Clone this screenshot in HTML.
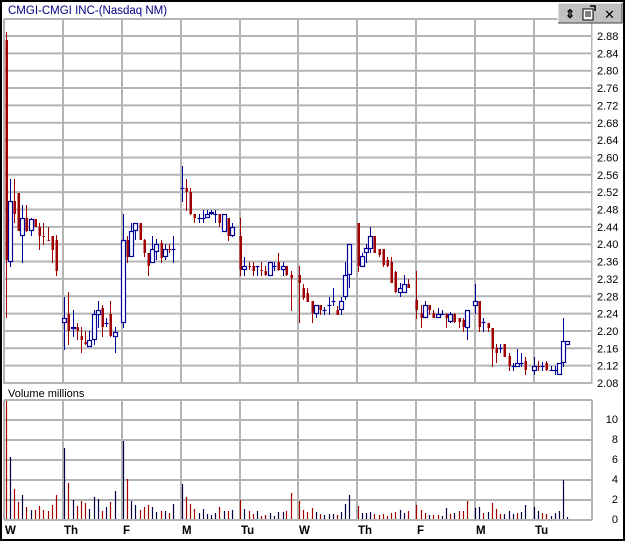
<!DOCTYPE html>
<html><head><meta charset="utf-8"><style>
html,body{margin:0;padding:0;background:#fff;}
body{width:625px;height:541px;overflow:hidden;position:relative;font-family:"Liberation Sans",Arial,sans-serif;}
#frame{position:absolute;left:0;top:0;width:621px;height:537px;border:2px solid #000;border-right-width:3px;border-bottom-width:2px;background:#fff;}
.t{position:absolute;font-size:11px;color:#000;}
</style></head><body>
<div id="frame"></div>
<svg id="s" width="625" height="541" style="position:absolute;left:0;top:0" xmlns="http://www.w3.org/2000/svg" font-family="Liberation Sans, Arial, sans-serif">
<text x="8" y="14" font-size="11.5" fill="#000080">CMGI-CMGI INC-(Nasdaq NM)</text>
<text x="8" y="397" font-size="11" fill="#000">Volume  millions</text>
<g id="g"></g>
<!-- toolbar -->
<rect x="558" y="3" width="64" height="20" fill="#c0c0c0"/>
<path d="M558 23V3H622" stroke="#fff" fill="none"/>
<path d="M558 23H622V3" stroke="#404040" fill="none"/>
<text x="565" y="18" font-size="12" font-weight="bold" fill="#000">⇕</text>
<rect x="583" y="9" width="10" height="11" fill="#fff" stroke="#000"/>
<path d="M585 12h6M585 14h6M585 16h6" stroke="#000"/>
<path d="M590 6l5 0 0 5" stroke="#000" fill="none" stroke-width="1.5"/>
<text x="604" y="19" font-size="13" fill="#000">✕</text>
</svg>
<script>
var g=document.getElementById('g'),h='';
function L(x1,y1,x2,y2,c,w){h+='<line x1="'+x1+'" y1="'+y1+'" x2="'+x2+'" y2="'+y2+'" stroke="'+c+'" stroke-width="'+(w||1)+'"/>';}
var G='#b4b4b4';
var vx=[4,63,122,181,240,298,357,416,475,534,592];
// price panel
for(var i=0;i<=20;i++){var y=36+i*17.35;L(4,y,592,y,G,2);}
vx.forEach(function(x){L(x,19,x,384,G,2);L(x,400,x,520,G,2);});
L(4,19,592,19,G,2);
for(var i=0;i<=6;i++){L(4,400+i*20,592,400+i*20,G,2);}
L(593,19,593,384,'#fff',1);
// price labels
for(var i=0;i<=20;i++){var p=(2.88-i*0.04).toFixed(2);h+='<text x="597" y="'+(36+i*17.35+4)+'" font-size="11">'+p+'</text>';}
for(var i=0;i<=5;i++){h+='<text x="618" y="'+(519-i*20+4)+'" font-size="11" text-anchor="end">'+(i*2)+'</text>';}
var days=['W','Th','F','M','Tu','W','Th','F','M','Tu'];
days.forEach(function(d,i){h+='<text x="'+(vx[i]+1)+'" y="534" font-size="11.5" font-weight="bold">'+d+'</text>';});
// candles: x,hi,lo,bt,bb,c
var C=[
[6,32,318,40,260,'r'],[10,179,267,201,262,'b'],[14,179,223,201,214,'r'],[18,193,231,193,231,'r'],[22,205,263,218,236,'b'],[26,205,232,218,231,'r'],[31,218,236,219,231,'b'],[35,219,227,219,227,'r'],[39,223,250,227,236,'r'],[43,223,245,236,237,'r'],[48,227,241,240,241,'r'],[52,236,263,236,250,'r'],[56,235,276,240,271,'r'],
[64,297,350,318,323,'b'],[68,292,345,314,331,'r'],[73,310,337,327,329,'b'],[77,323,340,327,331,'r'],[81,327,353,336,340,'r'],[85,331,345,342,344,'r'],[89,331,347,340,347,'b'],[94,310,345,314,340,'b'],[98,301,328,310,315,'b'],[102,305,337,308,327,'r'],[106,318,327,323,324,'b'],[110,301,337,314,336,'r'],[115,327,353,332,337,'b'],
[123,214,328,240,323,'b'],[127,236,263,240,257,'r'],[131,223,257,231,257,'b'],[135,223,240,223,231,'b'],[140,223,240,223,240,'r'],[144,239,257,240,253,'r'],[148,253,276,253,266,'r'],[152,236,263,249,263,'b'],[156,239,260,244,252,'b'],[161,240,263,243,258,'r'],[165,244,260,249,257,'b'],[169,244,253,249,250,'r'],[173,236,263,249,250,'b'],
[182,166,202,188,189,'b'],[186,179,211,188,192,'r'],[190,188,215,192,214,'r'],[194,214,223,214,218,'r'],[199,214,223,218,219,'b'],[203,210,223,218,219,'b'],[207,210,218,214,218,'b'],[211,210,215,212,214,'b'],[215,210,223,214,215,'b'],[219,214,227,214,223,'r'],[224,214,232,214,232,'b'],[228,218,241,218,236,'r'],[232,223,237,227,236,'b'],
[240,218,276,236,270,'r'],[244,257,276,266,270,'b'],[249,262,270,266,267,'r'],[253,262,276,266,271,'r'],[257,266,276,266,267,'b'],[261,262,276,270,271,'r'],[265,266,276,271,275,'r'],[270,262,276,262,276,'b'],[274,262,271,266,267,'b'],[278,253,271,262,270,'r'],[283,262,276,266,270,'b'],[286,266,276,266,275,'r'],[291,271,311,275,278,'r'],
[299,266,323,275,283,'r'],[303,284,300,288,298,'r'],[307,288,302,293,302,'r'],[312,301,323,301,313,'r'],[316,305,318,305,314,'b'],[320,305,315,305,310,'r'],[324,307,315,310,311,'b'],[329,297,315,305,306,'b'],[333,288,306,301,302,'b'],[337,306,315,310,315,'r'],[341,297,315,301,310,'b'],[345,262,300,275,297,'b'],[349,244,288,244,275,'b'],
[358,223,272,223,266,'r'],[362,253,267,256,267,'b'],[366,244,263,248,253,'b'],[370,227,253,236,249,'b'],[374,236,253,236,253,'r'],[379,249,257,249,255,'r'],[383,249,267,249,265,'r'],[387,257,267,260,266,'r'],[391,257,283,262,283,'r'],[395,271,293,272,292,'r'],[400,283,297,288,293,'b'],[404,275,293,284,293,'b'],[408,279,288,284,288,'r'],
[416,271,319,300,310,'r'],[421,305,328,313,318,'r'],[425,301,318,305,318,'b'],[429,305,315,305,310,'r'],[433,310,318,313,318,'r'],[438,308,318,314,318,'b'],[442,310,315,314,315,'b'],[446,313,328,314,318,'r'],[450,312,323,314,322,'b'],[454,313,323,314,322,'r'],[459,318,328,318,322,'r'],[463,318,332,320,327,'r'],[467,310,340,310,328,'b'],
[475,284,314,301,306,'b'],[479,301,332,301,327,'r'],[483,318,332,322,323,'b'],[488,323,332,323,328,'r'],[492,328,367,328,349,'r'],[496,344,363,348,353,'r'],[500,344,353,348,349,'b'],[504,344,357,344,357,'r'],[509,353,371,356,366,'r'],[513,363,371,366,367,'b'],[517,349,367,363,367,'b'],[521,353,367,363,364,'b'],[525,357,375,361,370,'r'],
[534,357,375,366,371,'b'],[538,361,371,366,367,'r'],[542,362,371,366,367,'b'],[546,361,371,363,370,'r'],[551,366,371,370,371,'b'],[555,366,375,370,371,'b'],[559,363,375,363,375,'b'],[563,318,367,341,363,'b'],[567,341,344,341,345,'b']];
var V=[11.8,6.2,3.0,1.7,2.4,1.2,0.9,0.9,1.3,0.9,0.8,1.4,2.4,
7.1,3.6,1.9,1.3,1.8,1.6,1.0,2.2,2.0,0.8,1.2,1.7,2.8,
7.8,4.0,1.8,1.4,0.9,1.2,1.4,1.2,0.7,0.8,0.8,0.6,1.5,
3.5,2.2,1.5,1.0,0.6,1.0,0.5,0.4,0.6,1.2,0.8,0.8,0.9,
1.9,1.0,0.8,0.5,0.8,0.3,0.4,0.6,0.3,0.7,0.7,0.8,2.6,
1.8,0.9,0.7,1.1,0.7,0.5,0.4,0.5,0.5,0.4,0.7,1.5,2.4,
1.3,0.6,0.6,0.7,0.5,0.4,0.5,0.3,0.6,0.7,0.9,0.6,0.8,
1.4,0.9,0.6,0.4,0.4,0.4,0.3,1.1,0.5,0.6,0.8,0.8,1.8,
1.1,1.2,0.6,0.7,1.6,1.0,0.5,0.5,0.8,0.5,0.6,0.7,1.4,
1.2,0.8,0.6,0.5,0.3,0.6,0.8,3.9,0.2];
var VC=['r','b','r','r','b','r','b','r','r','r','r','r','r','b','r','b','r','r','r','b','b','b','r','b','r','b','b','r','b','b','r','r','r','b','b','r','b','r','b','b','r','r','r','b','b','b','b','b','r','b','r','b','r','b','r','r','b','r','r','b','b','b','b','r','r','r','r','r','r','b','r','b','b','b','r','b','b','b','r','b','b','b','r','r','r','r','r','r','b','b','r','r','r','r','b','r','r','b','b','r','b','r','r','r','b','b','r','b','r','r','r','b','b','b','r','b','b','b','b','r','r','b','b','b','b','b','b'];
var RED='#a00000',BLU='#000099';
C.forEach(function(c,i){var x=c[0]+.5;var col=c[5]=='r'?RED:BLU;
 L(x,c[1],x,c[2],col,1);
 if(c[5]=='r'){h+='<rect x="'+(c[0]-0.5)+'" y="'+c[3]+'" width="2.5" height="'+Math.max(1,c[4]-c[3])+'" fill="'+RED+'"/>';}
 else{if(c[4]-c[3]<2)L(x-2,c[3]+.5,x+2,c[3]+.5,BLU,1.2);else h+='<rect x="'+(c[0]-1.5)+'" y="'+(c[3]+.5)+'" width="4" height="'+(c[4]-c[3]-1)+'" fill="#fff" stroke="'+BLU+'" stroke-width="1.2"/>';}
 var v=V[i];if(v!==undefined){var vc=(VC[i]||c[5])=='r'?'#a00000':'#000044';L(x,519-v*10,x,519,vc,1.2);}
});
g.innerHTML=h;
</script>
</body></html>
